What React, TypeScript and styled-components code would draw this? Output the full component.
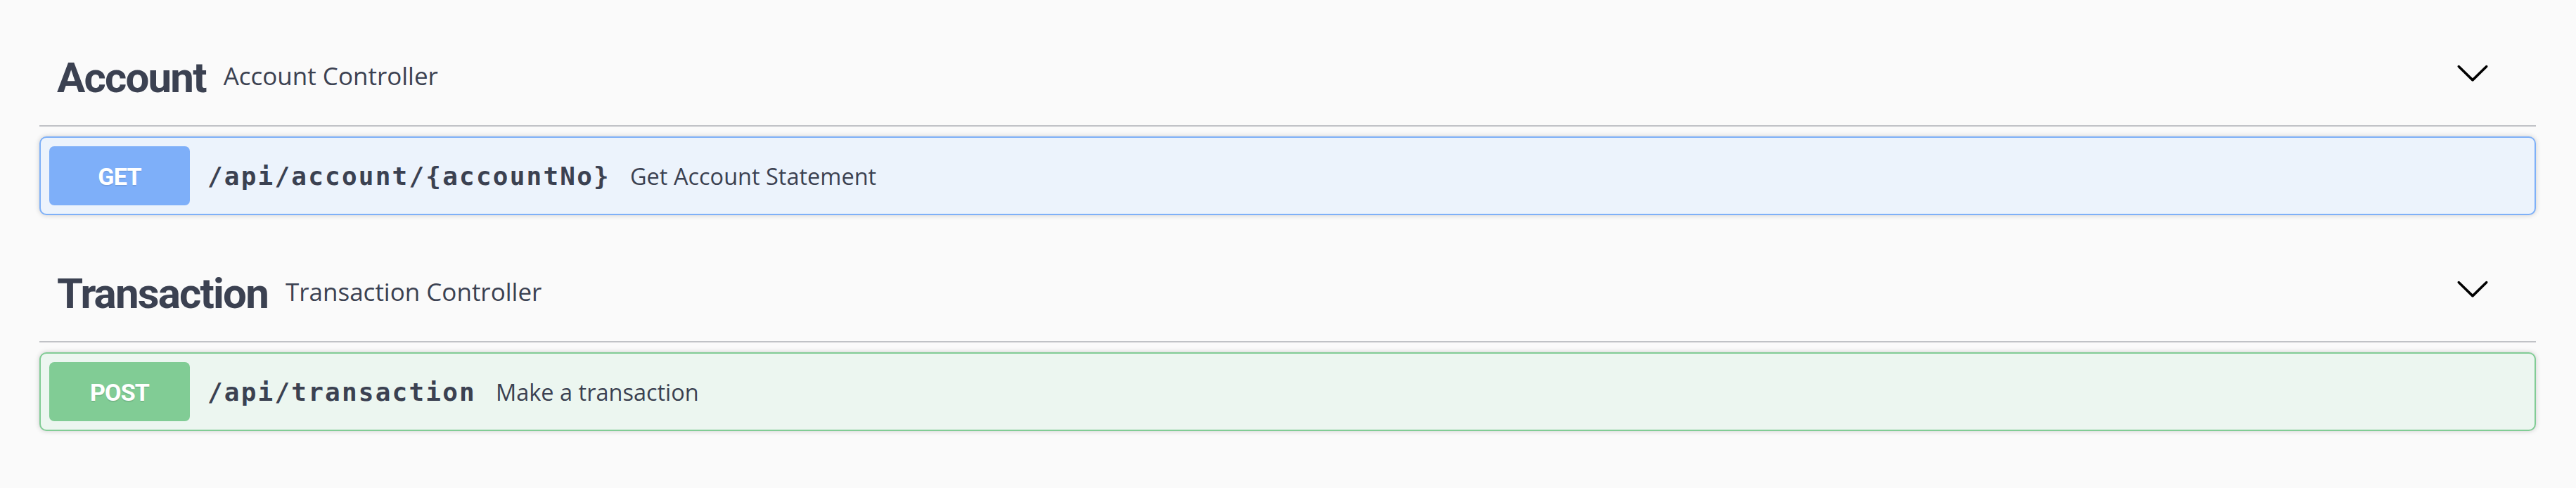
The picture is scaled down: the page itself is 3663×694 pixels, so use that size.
import React from "react";
import styled, { createGlobalStyle, css } from "styled-components";

const GlobalStyle = createGlobalStyle`
  html, body {
    margin: 0;
    padding: 0;
    background: #fafafa;
  }
  body {
    font-family: "Open Sans", "Noto Sans", sans-serif;
    color: #3b4151;
  }
`;

type Method = "get" | "post";

const methodColors: Record<Method, { badge: string; border: string; bg: string }> = {
  get: { badge: "#7eaff9", border: "#7eb0f8", bg: "#ecf3fc" },
  post: { badge: "#81cc95", border: "#81cc95", bg: "#ecf6f0" },
};

const Wrapper = styled.div`
  padding: 37px 57px 40px 56px;
  display: flex;
  flex-direction: column;
`;

const TagSection = styled.section`
  display: flex;
  flex-direction: column;
`;

const TagHeader = styled.h3`
  display: flex;
  align-items: center;
  margin: 0 0 14px;
  padding: 25px 50px 25px 25px;
  border-bottom: 2px solid rgba(59, 65, 81, 0.3);
  cursor: pointer;
`;

const TagTitle = styled.span`
  font-family: Roboto, "Open Sans", sans-serif;
  font-weight: 700;
  font-size: 60px;
  letter-spacing: -1.8px;
  line-height: 85px;
  padding-top: 6px;
  color: #3b4151;
`;

const TagDescription = styled.small`
  flex: 1;
  font-family: "Open Sans", sans-serif;
  font-size: 35px;
  font-weight: 400;
  padding: 0 25px;
  color: #3b4151;
`;

const ExpandButton = styled.button`
  display: flex;
  align-items: center;
  background: none;
  border: none;
  padding: 0 15px 9px;
  cursor: pointer;
  svg {
    width: 50px;
    height: 50px;
  }
`;

const Opblock = styled.div<{ $method: Method }>`
  margin: 0 0 38px;
  border-radius: 10px;
  box-shadow: 0 0 7px rgba(0, 0, 0, 0.19);
  ${({ $method }) => css`
    border: 2px solid ${methodColors[$method].border};
    background: ${methodColors[$method].bg};
  `}
`;

const Summary = styled.div`
  display: flex;
  align-items: center;
  padding: 12px;
  cursor: pointer;
`;

const MethodBadge = styled.span<{ $method: Method }>`
  min-width: 200px;
  height: 84px;
  box-sizing: border-box;
  padding-top: 2px;
  line-height: 82px;
  border-radius: 7px;
  text-align: center;
  font-family: Roboto, "Open Sans", sans-serif;
  font-weight: 700;
  font-size: 34px;
  letter-spacing: -0.8px;
  color: #fff;
  text-shadow: 0 2px 0 rgba(0, 0, 0, 0.1);
  background: ${({ $method }) => methodColors[$method].badge};
`;

const Path = styled.span`
  font-family: "DejaVu Sans Mono", "Liberation Mono", monospace;
  font-weight: 700;
  font-size: 36px;
  letter-spacing: 2.2px;
  padding: 0 25px;
  color: #3b4151;
`;

const Description = styled.span`
  flex: 1 1 auto;
  font-family: "Open Sans", sans-serif;
  font-size: 32.5px;
  padding-left: 3px;
  color: #3b4151;
`;

const Chevron = () => (
  <svg viewBox="0 0 20 20" aria-hidden="true">
    <path
      fill="#000"
      d="M17.418 6.109c.272-.268.709-.268.979 0s.271.701 0 .969l-7.908 7.83c-.27.268-.707.268-.979 0l-7.908-7.83c-.27-.268-.27-.701 0-.969.271-.268.709-.268.979 0L10 13.25l7.418-7.141z"
    />
  </svg>
);

type Op = { method: Method; path: string; summary: string };
type Tag = { name: string; description: string; ops: Op[] };

const tags: Tag[] = [
  {
    name: "Account",
    description: "Account Controller",
    ops: [{ method: "get", path: "/api/account/{accountNo}", summary: "Get Account Statement" }],
  },
  {
    name: "Transaction",
    description: "Transaction Controller",
    ops: [{ method: "post", path: "/api/transaction", summary: "Make a transaction" }],
  },
];

export default function App() {
  return (
    <>
      <GlobalStyle />
      <Wrapper>
        {tags.map((tag) => (
          <TagSection key={tag.name}>
            <TagHeader>
              <TagTitle>{tag.name}</TagTitle>
              <TagDescription>{tag.description}</TagDescription>
              <ExpandButton aria-label="Collapse operation">
                <Chevron />
              </ExpandButton>
            </TagHeader>
            {tag.ops.map((op) => (
              <Opblock key={op.path} $method={op.method}>
                <Summary>
                  <MethodBadge $method={op.method}>{op.method.toUpperCase()}</MethodBadge>
                  <Path>{op.path}</Path>
                  <Description>{op.summary}</Description>
                </Summary>
              </Opblock>
            ))}
          </TagSection>
        ))}
      </Wrapper>
    </>
  );
}
